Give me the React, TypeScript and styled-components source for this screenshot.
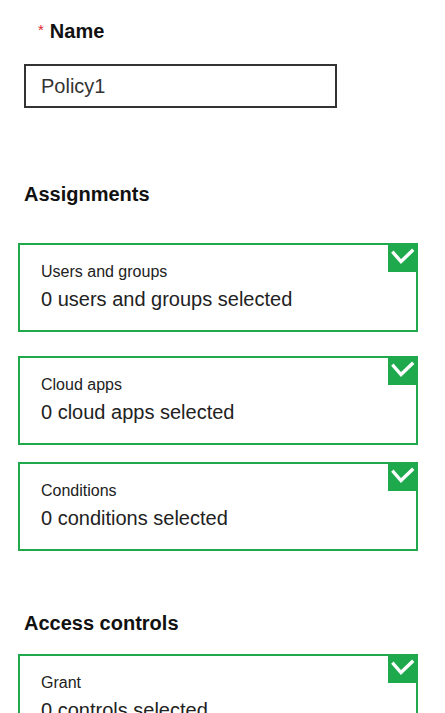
import React from "react";
import styled, { createGlobalStyle } from "styled-components";

const GlobalStyle = createGlobalStyle`
    body {
        margin: 0;
        overflow: hidden;
        background: #ffffff;
        font-family: "Liberation Sans", Arial, sans-serif;
    }
`;

interface SectionCardProps {
    label: string;
    value: string;
    gap: number;
}

function CheckBadge(): React.ReactElement {
    return (
        <Badge>
            <svg width="30" height="29" viewBox="0 0 30 29">
                <polyline points="5.5,10 13,18.5 24,8" fill="none" stroke="#ffffff" strokeWidth="3.4" strokeLinecap="square" />
            </svg>
        </Badge>
    );
}

function SectionCard({ label, value, gap }: SectionCardProps): React.ReactElement {
    return (
        <Card $gap={gap}>
            <CheckBadge />
            <CardLabel>{label}</CardLabel>
            <CardValue>{value}</CardValue>
        </Card>
    );
}

export default function App(): React.ReactElement {
    return (
        <>
            <GlobalStyle />
            <Page>
                <NameRow>
                    <Required>*</Required>
                    <NameLabel>Name</NameLabel>
                </NameRow>
                <NameInput>Policy1</NameInput>

                <Heading $top={75}>Assignments</Heading>
                <SectionCard gap={37} label="Users and groups" value="0 users and groups selected" />
                <SectionCard gap={24} label="Cloud apps" value="0 cloud apps selected" />
                <SectionCard gap={17} label="Conditions" value="0 conditions selected" />

                <Heading $top={61}>Access controls</Heading>
                <SectionCard gap={19} label="Grant" value="0 controls selected" />
            </Page>
        </>
    );
}

const Page = styled.div`
    width: 445px;
    box-sizing: border-box;
    padding: 20px 0 0 18px;
    display: flex;
    flex-direction: column;
    align-items: flex-start;
`;

const NameRow = styled.div`
    display: flex;
    align-items: flex-start;
    margin-left: 20px;
    height: 23px;
`;

const Required = styled.span`
    color: #e3242b;
    font-size: 15px;
    line-height: 15px;
    margin-top: 2px;
    margin-right: 6px;
`;

const NameLabel = styled.span`
    font-size: 20px;
    font-weight: bold;
    line-height: 23px;
    color: #111111;
`;

const NameInput = styled.div`
    margin: 21px 0 0 6px;
    width: 313px;
    height: 44px;
    box-sizing: border-box;
    border: 2px solid #333333;
    padding: 0 15px;
    display: flex;
    align-items: center;
    font-size: 20px;
    color: #333333;
`;

const Heading = styled.div<{ $top: number }>`
    margin: ${(p) => p.$top}px 0 0 6px;
    font-size: 20px;
    font-weight: bold;
    line-height: 23px;
    color: #111111;
`;

const Card = styled.div<{ $gap: number }>`
    position: relative;
    margin-top: ${(p) => p.$gap}px;
    width: 400px;
    height: 89px;
    flex-shrink: 0;
    box-sizing: border-box;
    border: 2px solid #20a84c;
    padding: 18px 0 0 21px;
    display: flex;
    flex-direction: column;
    gap: 6px;
`;

const Badge = styled.div`
    position: absolute;
    top: -2px;
    right: -2px;
    width: 30px;
    height: 29px;
    background: #1ea94c;
    display: flex;
`;

const CardLabel = styled.div`
    font-size: 16px;
    line-height: 18px;
    color: #222222;
`;

const CardValue = styled.div`
    font-size: 20px;
    line-height: 24px;
    color: #222222;
`;
